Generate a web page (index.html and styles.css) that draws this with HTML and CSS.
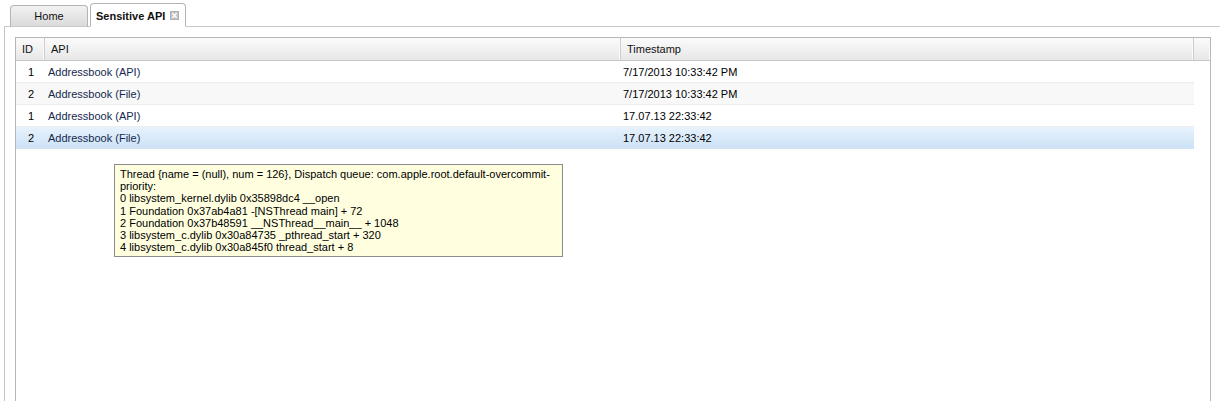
FILE: index.html
```html
<!DOCTYPE html>
<html>
<head>
<meta charset="utf-8">
<link rel="stylesheet" href="styles.css">
</head>
<body>
<div class="tabbar">
  <div class="tab">Home</div>
  <div class="tab active">Sensitive API
    <svg class="close" width="9" height="9" viewBox="0 0 9 9"><rect x="0.5" y="0.5" width="8" height="8" fill="#c4c4c4" stroke="#b0b0b0"/><path d="M2.3 2.3 L6.7 6.7 M6.7 2.3 L2.3 6.7" stroke="#fff" stroke-width="1.3"/></svg>
  </div>
</div>
<div class="panel">
  <div class="grid">
    <div class="head">
      <div class="hc c-id">ID</div>
      <div class="hc c-api">API</div>
      <div class="hc c-ts">Timestamp</div>
      <div class="hc c-fill"></div>
    </div>
    <div class="row">
      <div class="c c-id">1</div>
      <div class="c c-api api">Addressbook (API)</div>
      <div class="c c-ts">7/17/2013 10:33:42 PM</div>
    </div>
    <div class="row alt">
      <div class="c c-id">2</div>
      <div class="c c-api api">Addressbook (File)</div>
      <div class="c c-ts">7/17/2013 10:33:42 PM</div>
    </div>
    <div class="row">
      <div class="c c-id">1</div>
      <div class="c c-api api">Addressbook (API)</div>
      <div class="c c-ts">17.07.13 22:33:42</div>
    </div>
    <div class="row sel">
      <div class="c c-id">2</div>
      <div class="c c-api api">Addressbook (File)</div>
      <div class="c c-ts">17.07.13 22:33:42</div>
    </div>
  </div>
</div>
<div class="tooltip">Thread {name = (null), num = 126}, Dispatch queue: com.apple.root.default-overcommit-<br>priority:<br>0 libsystem_kernel.dylib 0x35898dc4 __open<br>1 Foundation 0x37ab4a81 -[NSThread main] + 72<br>2 Foundation 0x37b48591 __NSThread__main__ + 1048<br>3 libsystem_c.dylib 0x30a84735 _pthread_start + 320<br>4 libsystem_c.dylib 0x30a845f0 thread_start + 8</div>
</body>
</html>
```

FILE: styles.css
```css
html, body {
  margin: 0;
  padding: 0;
  background: #fff;
  overflow: hidden;
}
body {
  font-family: "Liberation Sans", Arial, sans-serif;
  font-size: 11px;
  color: #000;
  height: 401px;
}
.tabbar {
  margin-left: 4px;
  height: 26px;
  border-bottom: 1px solid #c9c9c9;
  display: flex;
  align-items: flex-end;
  padding-left: 6px;
  gap: 2px;
}
.tab {
  box-sizing: border-box;
  height: 22px;
  width: 78px;
  margin-bottom: -1px;
  border: 1px solid #b4b4b4;
  border-bottom: 1px solid #c9c9c9;
  border-radius: 4px 4px 0 0;
  background: linear-gradient(#f2f2f2, #dadada);
  display: flex;
  align-items: center;
  justify-content: center;
  color: #111;
}
.tab.active {
  height: 24px;
  width: 96px;
  background: #fff;
  border-bottom-color: #fff;
  font-weight: bold;
  justify-content: flex-start;
  padding-left: 5px;
  padding-top: 1px;
  gap: 5px;
}
.close { display: block; }
.panel {
  margin-left: 4px;
  border-left: 1px solid #c4c4c4;
  padding: 10px 10px 0 10px;
  height: 380px;
}
.grid {
  width: 1196px;
  height: 380px;
  border: 1px solid #b3b8bf;
  box-sizing: border-box;
  background: #fff;
}
.head {
  display: flex;
  height: 22px;
  border-bottom: 1px solid #c4c8cc;
  background: linear-gradient(#fbfbfb, #e7e7e7);
}
.hc {
  box-sizing: border-box;
  border-right: 1px solid #cdcdcd;
  box-shadow: inset -1px 0 0 #fafafa;
  padding-left: 6px;
  line-height: 22px;
  color: #111;
}
.c-id { width: 29px; }
.c-api { width: 576px; }
.c-ts { width: 573px; }
.c-fill { flex: 1; border-right: none; }
.row {
  display: flex;
  width: 1178px;
  height: 21px;
  border-bottom: 1px solid #ececec;
  align-items: center;
}
.row.alt { background: #f8f8f8; }
.row.sel {
  background: linear-gradient(#e7f2fd, #cde2f7);
  border-bottom-color: #d3e3f4;
}
.c { box-sizing: border-box; }
.row .c-id { text-align: center; padding-left: 1px; }
.row .c-api { padding-left: 3px; }
.row .c-ts { padding-left: 2px; }
.api { color: #15294f; }
.tooltip {
  position: absolute;
  left: 114px;
  top: 164px;
  width: 449px;
  box-sizing: border-box;
  border: 1px solid #8c8c8c;
  background: #ffffe0;
  padding: 3px 5px;
  line-height: 12.2px;
  color: #000;
  white-space: nowrap;
}
```
